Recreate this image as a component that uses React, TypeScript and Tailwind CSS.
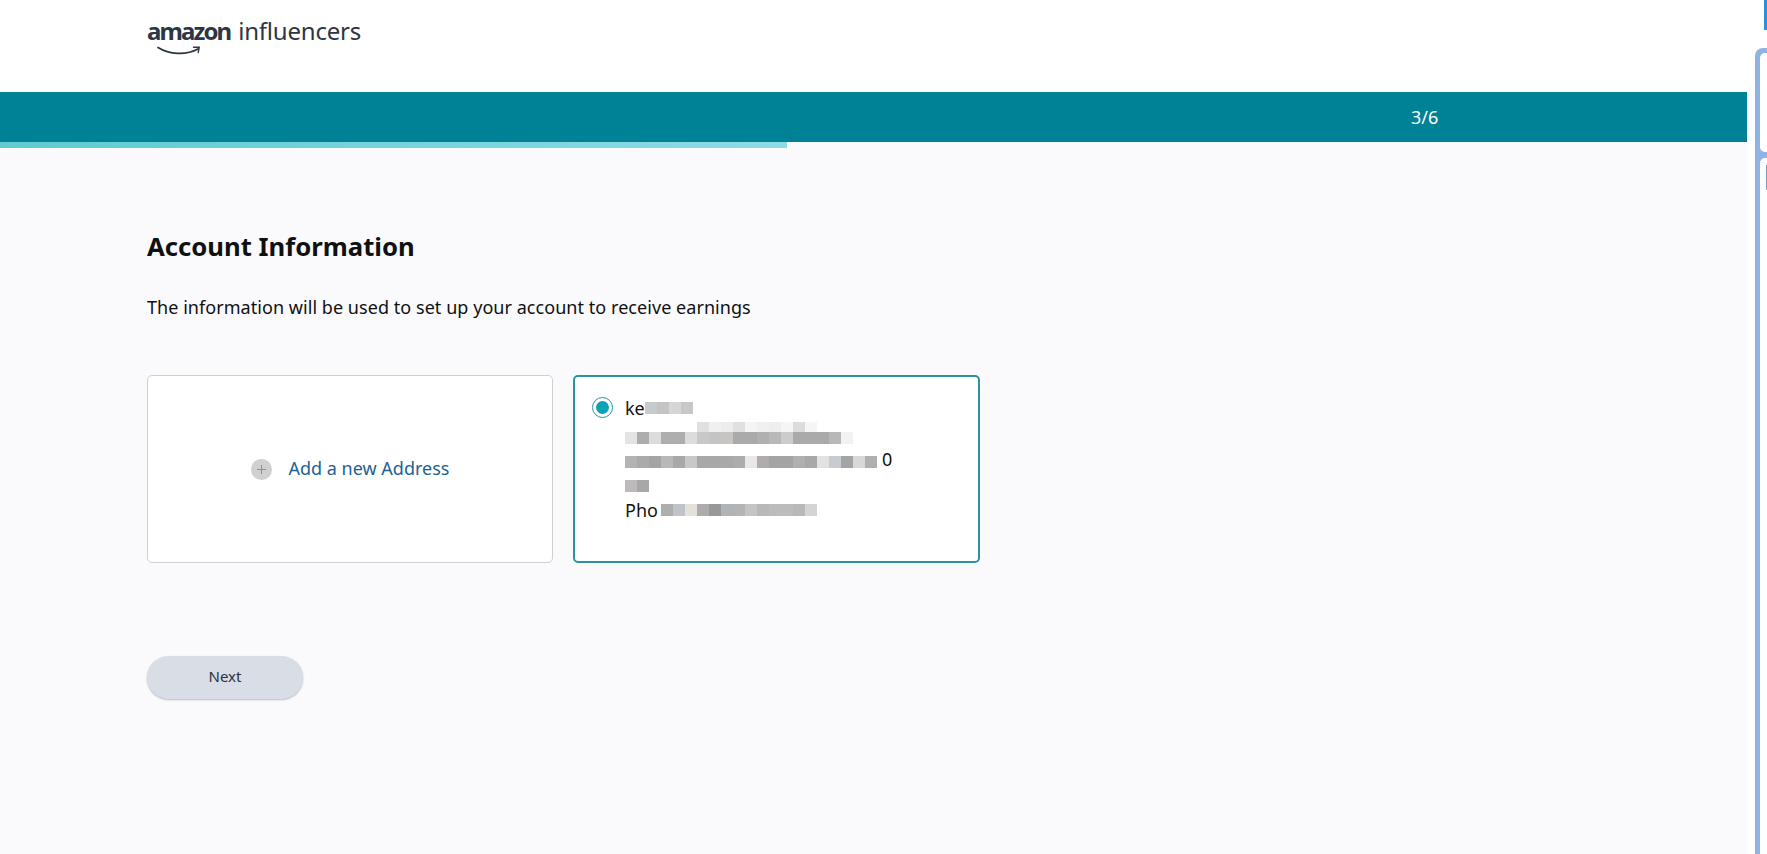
const FONT = "font-['Noto_Sans',sans-serif]";

// redaction mosaic cells, one 12px wide entry each
function Mosaic({ cells, short }: { cells: string[]; short?: boolean }) {
  return (
    <div className={short ? "flex h-[10px]" : "flex h-3"}>
      {cells.map((c, i) => (
        <div key={i} className="w-3" style={{ backgroundColor: c }} />
      ))}
    </div>
  );
}

function Logo() {
  return (
    <div className="relative flex items-baseline text-[#2c3644] leading-none">
      <span className="text-[24px] font-bold tracking-[-1.9px]">amazon</span>
      <span className="ml-[8px] text-[24px] font-normal tracking-[-0.2px]">influencers</span>
      <svg className="absolute left-[10px] top-[27px]" width="44" height="11" viewBox="0 0 44 11" fill="none">
        <path d="M1 1.5C12 8.5 29 9.5 41 3" stroke="#2c3644" strokeWidth="1.8" strokeLinecap="round" />
        <path d="M36.5 1.2L42.2 1.2L41.2 6.5" stroke="#2c3644" strokeWidth="1.4" strokeLinecap="round" />
      </svg>
    </div>
  );
}

export default function App() {
  return (
    <div className={`flex h-[854px] w-[1767px] overflow-hidden bg-white ${FONT}`}>
      <div className="flex flex-col w-[1747px]">
        <header className="h-[92px] pl-[147px] pt-[19px]">
          <Logo />
        </header>

        <div className="h-[50px] bg-[#008296] flex items-center pl-[1411px] text-white text-[18px]">3/6</div>

        <main className="flex-1 bg-[#fafafc]">
          <div className="h-[6px] w-[787px] bg-gradient-to-r from-[#5fcbd0] to-[#8ddbe4]" />
          <div className="pl-[147px] pt-[82px]">
            <h1 className="text-[25.7px] font-bold leading-[34px] text-[#0f1111]">Account Information</h1>
            <p className="mt-[31px] text-[18px] tracking-[0.05px] leading-6 text-[#0f1111]">
              The information will be used to set up your account to receive earnings
            </p>

            <div className="mt-[56px] flex gap-5">
              <div className="w-[406px] h-[188px] bg-white border border-[#d0d0d0] rounded-[5px] flex items-center justify-center">
                <div className="flex items-center gap-[17px]">
                  <div className="w-[21px] h-[21px] rounded-full bg-[#d0d0d0] flex items-center justify-center">
                    <svg width="11" height="11" viewBox="0 0 11 11">
                      <path d="M5.5 1v9M1 5.5h9" stroke="#8f8f8f" strokeWidth="1" />
                    </svg>
                  </div>
                  <span className="pb-[2px] text-[18px] text-[#1d6197]">Add a new Address</span>
                </div>
              </div>

              <div className="w-[407px] h-[188px] bg-white border-2 border-[#2b929f] rounded-[5px] flex pl-[17px] pt-[19px]">
                <div className="mt-[1px] w-[21px] h-[21px] rounded-full border border-[#2b929f] flex items-center justify-center shrink-0">
                  <div className="w-[13px] h-[13px] rounded-full bg-[#0ba3b5]" />
                </div>
                <div className="ml-[12px] text-[18px] text-[#111]">
                  <div className="flex items-center h-6">
                    <span className="leading-6">ke</span>
                    <Mosaic cells={["#c6cacd", "#c4c4c4", "#d6d6d6", "#c8c8c8"]} />
                  </div>
                  <div className="flex flex-col justify-end h-6">
                    <div className="ml-[72px]">
                      <Mosaic short cells={["#e0e0e0", "#f0f0f0", "#ececec", "#e0e0e0", "#f5f5f5", "#f0f0f0", "#eeeeee", "#f5f5f5", "#dcdcdc", "#f5f5f5"]} />
                    </div>
                    <Mosaic cells={["#e4e4e4", "#adadad", "#dcdcdc", "#aeaeae", "#aeaeae", "#dcdcdc", "#c8c8c8", "#c4c4c4", "#c8c4c4", "#aaaaaa", "#aaaaaa", "#b0b0b0", "#b8b8b8", "#cccccc", "#aaaaaa", "#aaaaaa", "#aaaaaa", "#b8b8b8", "#f0f2f4"]} />
                  </div>
                  <div className="flex items-end h-6">
                    <Mosaic cells={["#b4b2b2", "#aaaaaa", "#a4a4a4", "#b8b8b8", "#a8a8a8", "#c8c8c8", "#a8a8a8", "#a8a8a8", "#a8a8a8", "#acacac", "#e8e8e8", "#b0acac", "#a4a4a4", "#a4a4a4", "#b0b0b0", "#a8a8a8", "#e4e2e0", "#c8ccd0", "#a4a4a4", "#d8d8d8", "#b0b0b0"]} />
                    <span className="ml-[5px] mb-[3px] h-3 leading-3">0</span>
                  </div>
                  <div className="flex items-end h-6">
                    <Mosaic cells={["#bcbaba", "#a8a8a8"]} />
                  </div>
                  <div className="flex items-end h-6">
                    <span className="w-9 h-3 leading-3">Pho</span>
                    <Mosaic cells={["#aeaeae", "#c0c4c8", "#e4e0da", "#acacac", "#989898", "#b0b4b6", "#b4b4b4", "#c4c4c4", "#b8b8b8", "#bcbcbc", "#bcbcbc", "#b8b8b8", "#d4d4d4"]} />
                  </div>
                </div>
              </div>
            </div>

            <button className="mt-[93px] w-[156px] h-[43px] pb-[2px] rounded-full bg-[#d8dde6] shadow-[0_1px_2px_rgba(0,0,0,0.25)] text-[15px] text-[#2b3340]">
              Next
            </button>
          </div>
        </main>
      </div>

      {/* edge of the neighbouring window */}
      <div className="relative w-5 bg-white">
        <div className="absolute right-0 top-0 w-[3px] h-[30px] bg-[#2f8fd8]" />
        <div className="absolute left-[8px] top-[48px] w-3 h-[806px] bg-[#8fb4e3] rounded-tl-[8px]">
          <div className="ml-[5px] mt-[5px] h-[99px] bg-white rounded-l-[5px]" />
          <div className="relative ml-[5px] mt-[6px] h-[696px] bg-white rounded-tl-[5px]">
            <div className="absolute left-[6px] top-[7px] w-px h-[25px] bg-[#7e9cc4]" />
          </div>
        </div>
      </div>
    </div>
  );
}
